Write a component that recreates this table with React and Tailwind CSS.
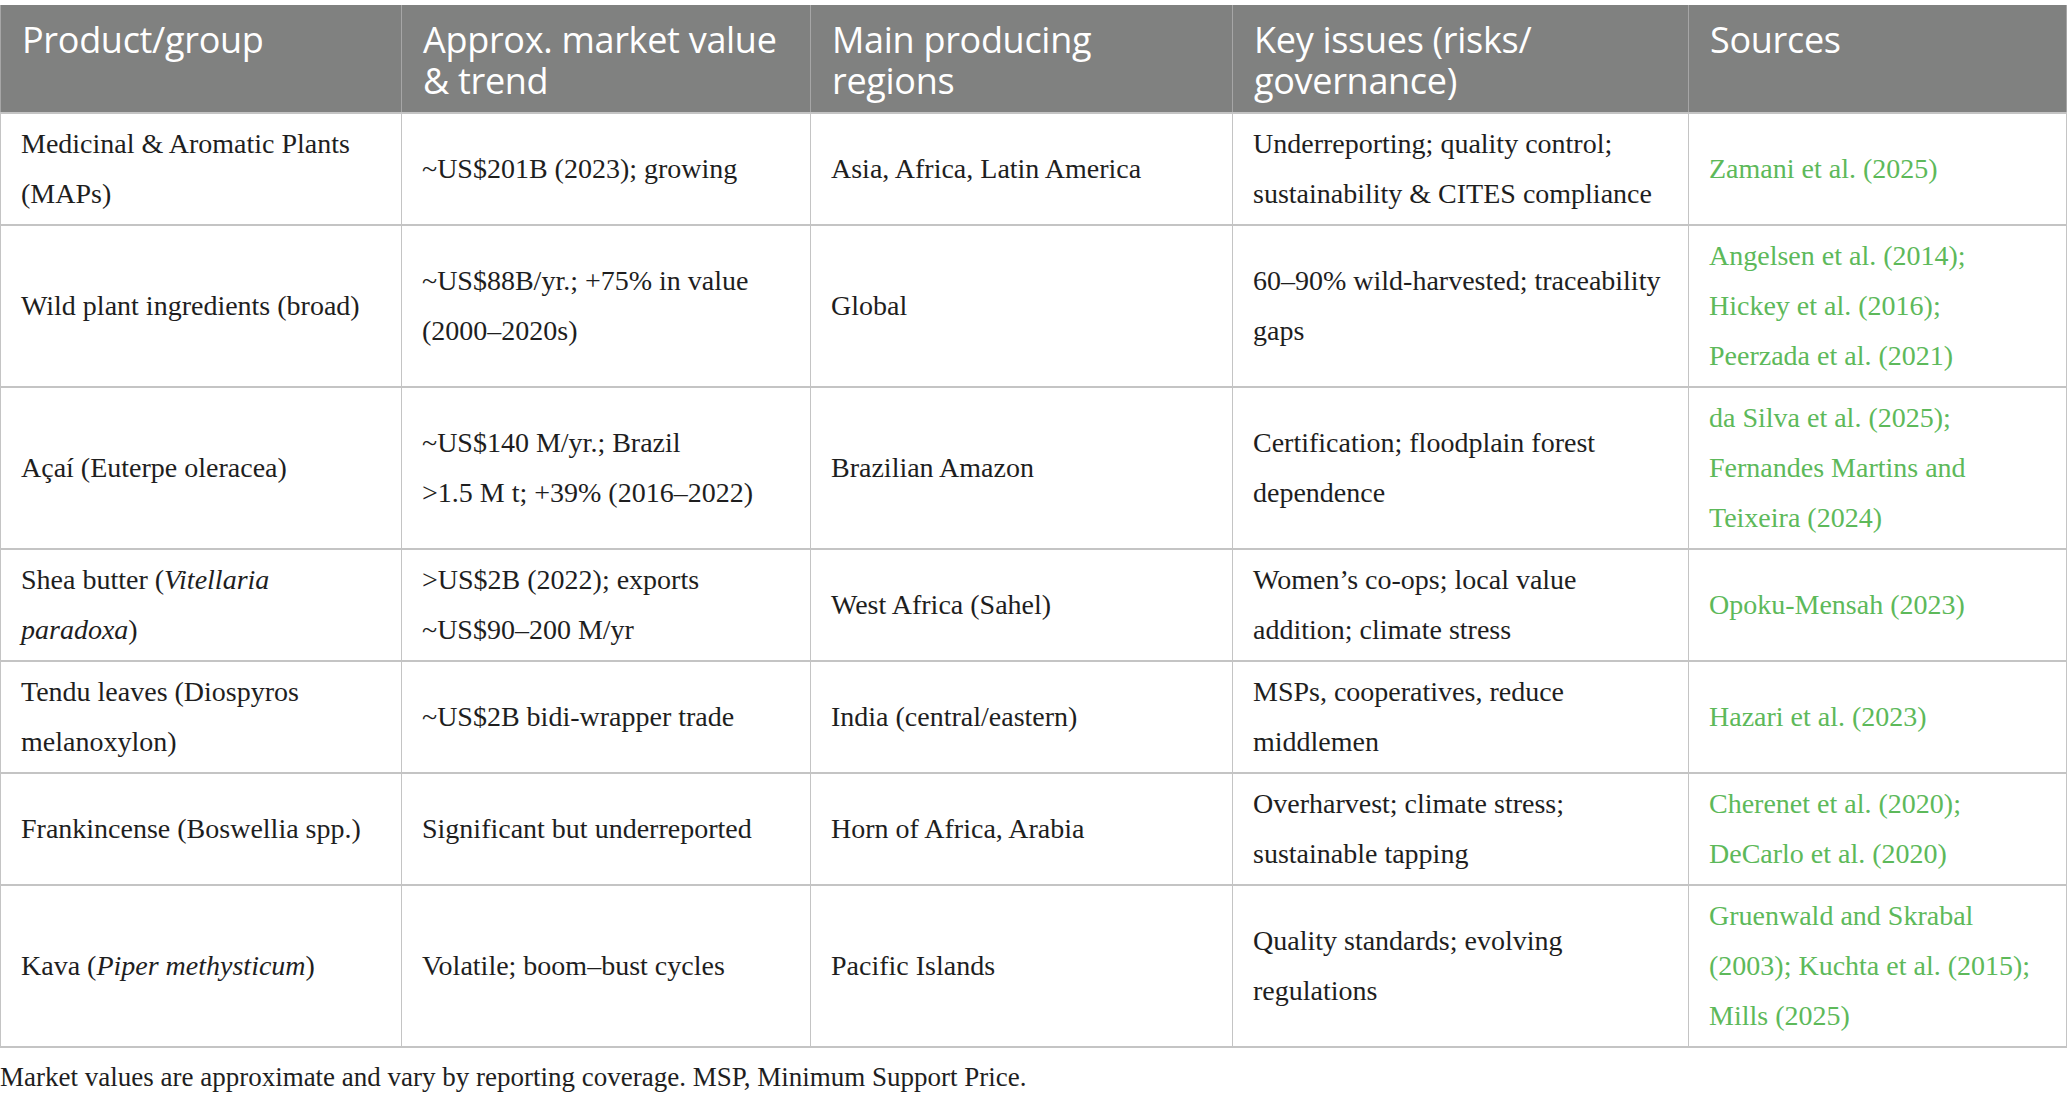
const head = [
  ["Product/group"],
  ["Approx. market value", "& trend"],
  ["Main producing", "regions"],
  ["Key issues (risks/", "governance)"],
  ["Sources"],
];

const rows = [
  {
    h: "h-[112px]",
    cells: [
      [["Medicinal & Aromatic Plants"], ["(MAPs)"]],
      [["~US$201B (2023); growing"]],
      [["Asia, Africa, Latin America"]],
      [["Underreporting; quality control;"], ["sustainability & CITES compliance"]],
    ],
    src: ["Zamani et al. (2025)"],
  },
  {
    h: "h-[159px]",
    cells: [
      [["Wild plant ingredients (broad)"]],
      [["~US$88B/yr.; +75% in value"], ["(2000–2020s)"]],
      [["Global"]],
      [["60–90% wild-harvested; traceability"], ["gaps"]],
    ],
    src: ["Angelsen et al. (2014);", "Hickey et al. (2016);", "Peerzada et al. (2021)"],
  },
  {
    h: "h-[159px]",
    cells: [
      [["Açaí (Euterpe oleracea)"]],
      [["~US$140 M/yr.; Brazil"], [">1.5 M t; +39% (2016–2022)"]],
      [["Brazilian Amazon"]],
      [["Certification; floodplain forest"], ["dependence"]],
    ],
    src: ["da Silva et al. (2025);", "Fernandes Martins and", "Teixeira (2024)"],
  },
  {
    h: "h-[111px]",
    cells: [
      [["Shea butter (", <i key="i">Vitellaria</i>], [<i key="i">paradoxa</i>, ")"]],
      [[">US$2B (2022); exports"], ["~US$90–200 M/yr"]],
      [["West Africa (Sahel)"]],
      [["Women’s co-ops; local value"], ["addition; climate stress"]],
    ],
    src: ["Opoku-Mensah (2023)"],
  },
  {
    h: "h-[110px]",
    cells: [
      [["Tendu leaves (Diospyros"], ["melanoxylon)"]],
      [["~US$2B bidi-wrapper trade"]],
      [["India (central/eastern)"]],
      [["MSPs, cooperatives, reduce"], ["middlemen"]],
    ],
    src: ["Hazari et al. (2023)"],
  },
  {
    h: "h-[108px]",
    cells: [
      [["Frankincense (Boswellia spp.)"]],
      [["Significant but underreported"]],
      [["Horn of Africa, Arabia"]],
      [["Overharvest; climate stress;"], ["sustainable tapping"]],
    ],
    src: ["Cherenet et al. (2020);", "DeCarlo et al. (2020)"],
  },
  {
    h: "h-[160px]",
    cells: [
      [["Kava (", <i key="i">Piper methysticum</i>, ")"]],
      [["Volatile; boom–bust cycles"]],
      [["Pacific Islands"]],
      [["Quality standards; evolving"], ["regulations"]],
    ],
    src: ["Gruenwald and Skrabal", "(2003); Kuchta et al. (2015);", "Mills (2025)"],
  },
];

export default function App() {
  return (
    <div className="w-[2068px] h-[1096px] bg-white overflow-hidden pt-[5px] font-['Liberation_Serif',serif] text-[#1e1e1e]">
      <table className="table-fixed border-collapse w-[2066px]">
        <colgroup>
          <col className="w-[401px]" />
          <col className="w-[409px]" />
          <col className="w-[422px]" />
          <col className="w-[456px]" />
          <col className="w-[378px]" />
        </colgroup>
        <thead>
          <tr className="bg-[#808180] h-[108px]">
            {head.map((lines, i) => (
              <th
                key={i}
                className="align-top text-left font-normal text-white pl-[21px] pr-2 pt-[14px] pb-2 border-x border-[#a6a6a6] font-['Open_Sans',sans-serif] text-[36px] leading-[41px] tracking-[-0.3px] whitespace-nowrap"
              >
                {lines.map((l, j) => (
                  <span key={j}>
                    {j > 0 && <br />}
                    {l}
                  </span>
                ))}
              </th>
            ))}
          </tr>
        </thead>
        <tbody>
          {rows.map((r, i) => (
            <tr key={i} className={`${r.h} border-y-2 border-[#c4c4c4]`}>
              {r.cells.map((lines, j) => (
                <td
                  key={j}
                  className="align-middle pl-[20px] pr-2 py-[5px] border-x border-[#c4c4c4] text-[28px] leading-[50px]"
                >
                  {lines.map((l, k) => (
                    <div key={k} className="whitespace-nowrap">{l}</div>
                  ))}
                </td>
              ))}
              <td className="align-middle pl-[20px] pr-2 py-[5px] border-x border-[#c4c4c4] text-[28px] leading-[50px] text-[#5db95a]">
                {r.src.map((l, k) => (
                  <div key={k} className="whitespace-nowrap">{l}</div>
                ))}
              </td>
            </tr>
          ))}
        </tbody>
      </table>
      <p className="mt-[9px] text-[27px] leading-[40px] whitespace-nowrap">
        Market values are approximate and vary by reporting coverage. MSP, Minimum Support Price.
      </p>
    </div>
  );
}
